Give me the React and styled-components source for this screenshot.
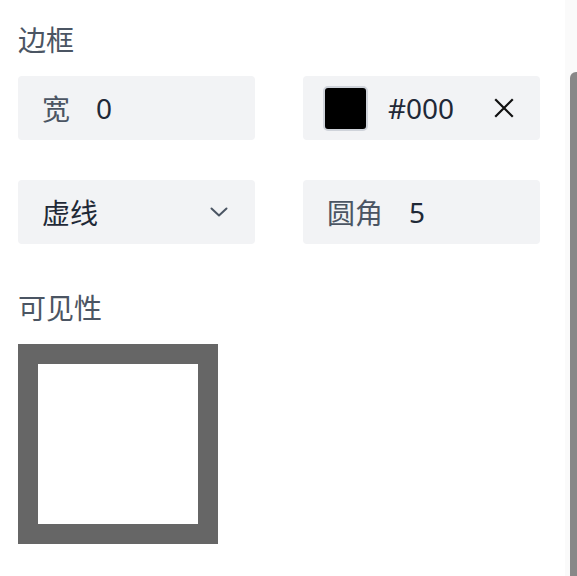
import React from "react";
import styled, { createGlobalStyle } from "styled-components";

const GlobalStyle = createGlobalStyle`
  html, body {
    margin: 0;
    padding: 0;
    background: #ffffff;
  }
  body {
    font-family: "Noto Sans", "Noto Sans CJK SC", sans-serif;
  }
`;

const Panel = styled.div`
  display: flex;
  height: 100vh;
  overflow: hidden;
  background: #ffffff;
`;

const Content = styled.div`
  flex: 1;
  box-sizing: border-box;
  padding: 20px 18px 0;
`;

const ScrollRail = styled.div`
  display: flex;
  flex-direction: column;
  width: 12px;
  box-sizing: border-box;
  padding: 72px 0 0 5px;
  background: #fafafa;
`;

const ScrollThumb = styled.div`
  flex: 1;
  background: #888888;
  border-top-left-radius: 6px;
`;

const SectionTitle = styled.div`
  font-size: 28px;
  line-height: 40px;
  color: #4b5563;
  margin-bottom: ${(p) => p.$gap || 16}px;
`;

const FieldGrid = styled.div`
  display: grid;
  grid-template-columns: 237px 237px;
  column-gap: 48px;
  row-gap: 40px;
  margin-bottom: 44px;
`;

const Field = styled.div`
  display: flex;
  align-items: center;
  gap: ${(p) => p.$gap || 26}px;
  height: 64px;
  padding: 0 24px;
  box-sizing: border-box;
  background: #f2f3f5;
  border-radius: 4px;
  font-size: 28px;
`;

const FieldLabel = styled.span`
  color: #4b5563;
`;

const FieldValue = styled.span`
  color: #1f2937;
  flex: 1;
`;

const Swatch = styled.span`
  width: 45px;
  height: 45px;
  box-sizing: border-box;
  border: 2px solid #cfd3da;
  border-radius: 5px;
  background: ${(p) => p.$color};
  margin-left: -4px;
  flex-shrink: 0;
`;

const IconButton = styled.span`
  display: flex;
  align-items: center;
  justify-content: center;
  color: ${(p) => p.$color || "#111111"};
  margin-right: ${(p) => p.$shift || 0}px;
`;

const Preview = styled.div`
  width: 200px;
  height: 200px;
  box-sizing: border-box;
  border: 20px solid #666666;
  background: #ffffff;
`;

const CloseIcon = () => (
  <svg width="20" height="20" viewBox="0 0 20 20" fill="none">
    <path d="M2 2 L18 18 M18 2 L2 18" stroke="currentColor" strokeWidth="2.2" strokeLinecap="square" />
  </svg>
);

const ChevronIcon = () => (
  <svg width="18" height="10" viewBox="0 0 18 10" fill="none">
    <path d="M1.5 1.5 L9 8.5 L16.5 1.5" stroke="currentColor" strokeWidth="2" strokeLinecap="round" strokeLinejoin="round" />
  </svg>
);

const App = () => {
  return (
    <Panel>
      <GlobalStyle />
      <Content>
        <SectionTitle>边框</SectionTitle>
        <FieldGrid>
          <Field>
            <FieldLabel>宽</FieldLabel>
            <FieldValue>0</FieldValue>
          </Field>
          <Field $gap={20}>
            <Swatch $color="#000000" />
            <FieldValue>#000</FieldValue>
            <IconButton $shift={2}>
              <CloseIcon />
            </IconButton>
          </Field>
          <Field>
            <FieldValue>虚线</FieldValue>
            <IconButton $color="#4b5563" $shift={3}>
              <ChevronIcon />
            </IconButton>
          </Field>
          <Field>
            <FieldLabel>圆角</FieldLabel>
            <FieldValue>5</FieldValue>
          </Field>
        </FieldGrid>
        <SectionTitle $gap={16}>可见性</SectionTitle>
        <Preview />
      </Content>
      <ScrollRail>
        <ScrollThumb />
      </ScrollRail>
    </Panel>
  );
};

export default App;
